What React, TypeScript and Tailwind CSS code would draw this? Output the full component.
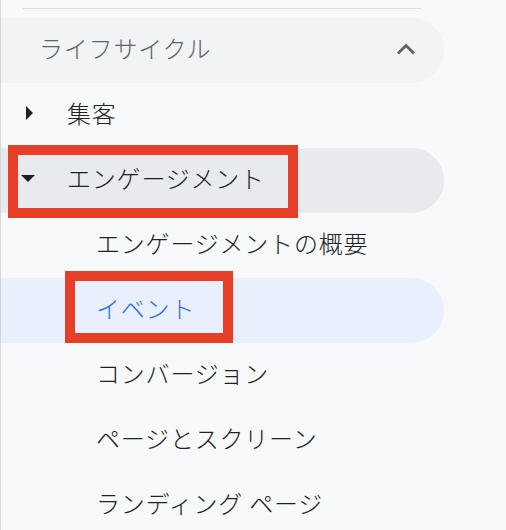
import React from "react";

const font = { fontFamily: '"Noto Sans CJK JP", "Noto Sans", sans-serif' };

export default function App() {
  return (
    <div
      className="w-[506px] h-[530px] overflow-hidden bg-[#f8f9fa] border-l border-[#d3d5d8] relative"
      style={font}
    >
      <div className="pt-[8px]">
        <div className="ml-[22px] w-[398px] h-px bg-[#dadce0]" />
      </div>
      <div className="mt-[9px] flex flex-col">
        {/* Lifecycle header */}
        <div className="h-[65px] w-[443px] rounded-r-full bg-[#f1f3f4] flex items-center justify-between pl-[38px] pr-[28px] pb-[5px]">
          <span className="text-[24px] font-light tracking-[0.8px] text-[#5f6368]">ライフサイクル</span>
          <svg width="20" height="14" viewBox="0 0 20 14" className="mt-[2px]">
            <path d="M2 11.5 L10 3.5 L18 11.5" fill="none" stroke="#5f6368" strokeWidth="2.8" />
          </svg>
        </div>
        {/* 集客 */}
        <div className="h-[65px] w-[443px] flex items-center pb-[5px]">
          <div className="w-[66px] flex items-center pl-[24px]">
            <svg width="8" height="14" viewBox="0 0 8 14">
              <path d="M1 0 L8 7 L1 14 Z" fill="#202124" />
            </svg>
          </div>
          <span className="text-[24px] font-light tracking-[0.8px] text-[#202124]">集客</span>
        </div>
        {/* エンゲージメント */}
        <div className="relative h-[65px] w-[443px] rounded-r-full bg-[#e8eaed] flex items-center pb-[5px]">
          <div className="w-[66px] flex items-center pl-[20px]">
            <svg width="14" height="8" viewBox="0 0 14 8">
              <path d="M0 1 L14 1 L7 8 Z" fill="#202124" />
            </svg>
          </div>
          <span className="text-[24px] font-light tracking-[0.8px] text-[#202124]">エンゲージメント</span>
          <div className="absolute left-[7px] top-[-3px] w-[290px] h-[73px] border-[10px] border-[#e53f28]" />
        </div>
        {/* 概要 */}
        <div className="h-[65px] w-[443px] flex items-center pl-[95px] pb-[5px]">
          <span className="text-[24px] font-light tracking-[0.8px] text-[#202124]">エンゲージメントの概要</span>
        </div>
        {/* イベント */}
        <div className="relative h-[65px] w-[443px] rounded-r-full bg-[#e8f0fe] flex items-center pl-[95px] pb-[5px]">
          <span className="text-[24px] font-light tracking-[0.8px] text-[#2f6bd6]">イベント</span>
          <div className="absolute left-[64px] top-[-7px] w-[168px] h-[72px] border-[10px] border-[#e53f28]" />
        </div>
        <div className="h-[65px] w-[443px] flex items-center pl-[95px] pb-[5px]">
          <span className="text-[24px] font-light tracking-[0.8px] text-[#202124]">コンバージョン</span>
        </div>
        <div className="h-[65px] w-[443px] flex items-center pl-[95px] pb-[5px]">
          <span className="text-[24px] font-light tracking-[0.8px] text-[#202124]">ページとスクリーン</span>
        </div>
        <div className="h-[65px] w-[443px] flex items-center pl-[95px] pb-[5px]">
          <span className="text-[24px] font-light tracking-[0.8px] text-[#202124]">ランディング ページ</span>
        </div>
      </div>
    </div>
  );
}
